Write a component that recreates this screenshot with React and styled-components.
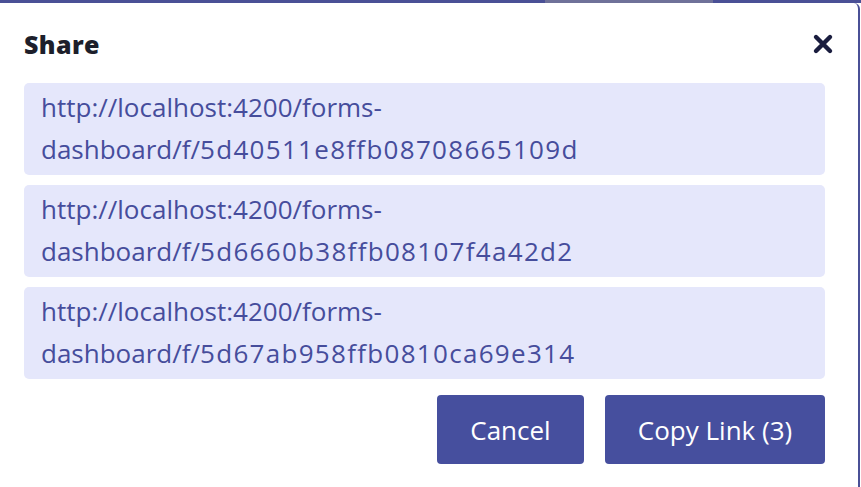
import React from "react";
import styled, { createGlobalStyle } from "styled-components";

const GlobalStyle = createGlobalStyle`
  html, body {
    margin: 0;
    padding: 0;
    background: #ffffff;
    font-family: "Open Sans", "Noto Sans", sans-serif;
  }
`;

const Page = styled.div`
  width: 861px;
  height: 487px;
  box-sizing: border-box;
  display: flex;
  flex-direction: column;
  overflow: hidden;
`;

const TopBar = styled.div`
  height: 3px;
  flex: none;
  background: linear-gradient(
    to right,
    #4a5096 0,
    #4a5096 545px,
    #6f7199 545px,
    #6f7199 713px,
    #4a5096 713px
  );
`;

const Modal = styled.div`
  flex: 1;
  background: #fff;
  border-right: 2px solid #4a5096;
  border-top-right-radius: 6px;
  margin-right: 1px;
  padding: 0 33px 0 24px;
  display: flex;
  flex-direction: column;
`;

const Header = styled.div`
  height: 80px;
  display: flex;
  align-items: center;
  justify-content: space-between;
`;

const Title = styled.h2`
  margin: 0;
  padding-top: 2px;
  font-size: 25px;
  font-weight: 800;
  letter-spacing: 0.4px;
  color: #1d1f2b;
`;

const Close = styled.button`
  border: 0;
  background: none;
  padding: 0;
  width: 24px;
  height: 24px;
  margin-right: -10px;
  margin-top: 2px;
  cursor: pointer;
`;

const LinkList = styled.div`
  display: flex;
  flex-direction: column;
  gap: 10px;
`;

const LinkBox = styled.div`
  background: #e5e7fb;
  border-radius: 5px;
  padding: 3px 17px 5px;
  font-size: 26px;
  line-height: 42px;
  color: #464d9c;
`;

const Id = styled.span`
  letter-spacing: 1.3px;
`;

const Footer = styled.div`
  display: flex;
  justify-content: flex-end;
  gap: 21px;
  margin-top: 16px;
`;

const Button = styled.button`
  height: 69px;
  width: ${p => p.w}px;
  border: 0;
  border-radius: 4px;
  background: #464f9e;
  color: #fff;
  font-family: "Open Sans", "Noto Sans", sans-serif;
  font-size: 26px;
  cursor: pointer;
`;

const links = [
  "5d40511e8ffb08708665109d",
  "5d6660b38ffb08107f4a42d2",
  "5d67ab958ffb0810ca69e314"
];

export default function App() {
  return (
    <>
      <GlobalStyle />
      <Page>
        <TopBar />
        <Modal>
          <Header>
            <Title>Share</Title>
            <Close aria-label="close">
              <svg width="24" height="24" viewBox="0 0 24 24">
                <path
                  d="M5 5 L19 19 M19 5 L5 19"
                  stroke="#1a1d3f"
                  strokeWidth="4.4"
                  strokeLinecap="round"
                />
              </svg>
            </Close>
          </Header>
          <LinkList>
            {links.map(id => (
              <LinkBox key={id}>
                http://localhost:4200/forms-
                <br />
                dashboard/f/<Id>{id}</Id>
              </LinkBox>
            ))}
          </LinkList>
          <Footer>
            <Button w={147}>Cancel</Button>
            <Button w={220}>Copy Link (3)</Button>
          </Footer>
        </Modal>
      </Page>
    </>
  );
}
